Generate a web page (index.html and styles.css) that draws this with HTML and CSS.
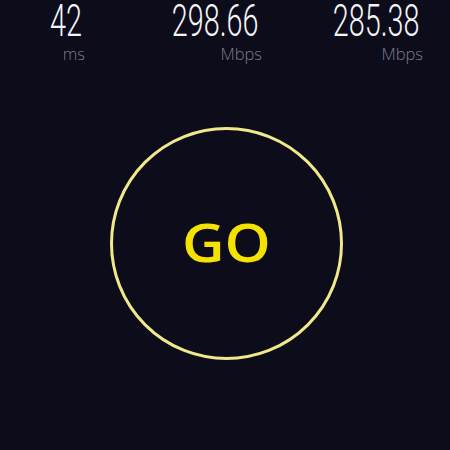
FILE: index.html
```html
<!DOCTYPE html>
<html lang="en">
<head>
    <meta charset="UTF-8">
    <meta name="viewport" content="width=device-width, initial-scale=1.0">
    <title>Speed Test</title>
    <link rel="stylesheet" href="styles.css">
</head>
<body>

    <section class="stats">
        <div class="stat stat-ping">
            <span class="stat-value">42</span>
            <span class="stat-unit">ms</span>
        </div>
        <div class="stat stat-down">
            <span class="stat-value">298.66</span>
            <span class="stat-unit">Mbps</span>
        </div>
        <div class="stat stat-up">
            <span class="stat-value">285.38</span>
            <span class="stat-unit">Mbps</span>
        </div>
    </section>

    <main class="start">
        <button class="go-button"><span class="go-label">GO</span></button>
    </main>

</body>
</html>
```

FILE: styles.css
```css
body {
    margin: 0;
    padding: 0;
    width: 450px;
    height: 450px;
    overflow: hidden;
    background-color: #0c0c1b; /* night navy */
    font-family: "Open Sans", sans-serif;
}

.stats {
    display: grid;
    grid-template-columns: 82px 177px 161px;
}

.stat {
    display: flex;
    flex-direction: column;
    align-items: flex-end;
}

.stat-value {
    display: inline-block;
    font-family: "Roboto", sans-serif;
    font-weight: 300;
    font-size: 45px;
    line-height: 42px;
    color: #f4f4f6;
    transform: scaleX(0.64);
    transform-origin: right center;
}

.stat-unit {
    margin-top: 3px;
    margin-right: -3px;
    font-size: 16.5px;
    font-weight: 300;
    line-height: 18px;
    color: #7b7b8a;
}

.start {
    display: flex;
    justify-content: center;
    padding-top: 64px;
    padding-left: 2px;
}

.go-button {
    width: 233px;
    height: 233px;
    border: 3px solid #f0e88a; /* pale yellow ring */
    border-radius: 50%;
    background: transparent;
    padding: 0 0 4px;
    cursor: pointer;
}

.go-label {
    display: inline-block;
    color: #f6e200;
    font-family: "Open Sans", sans-serif;
    font-weight: 600;
    font-size: 52px;
    transform: scaleX(1.13);
}
```
